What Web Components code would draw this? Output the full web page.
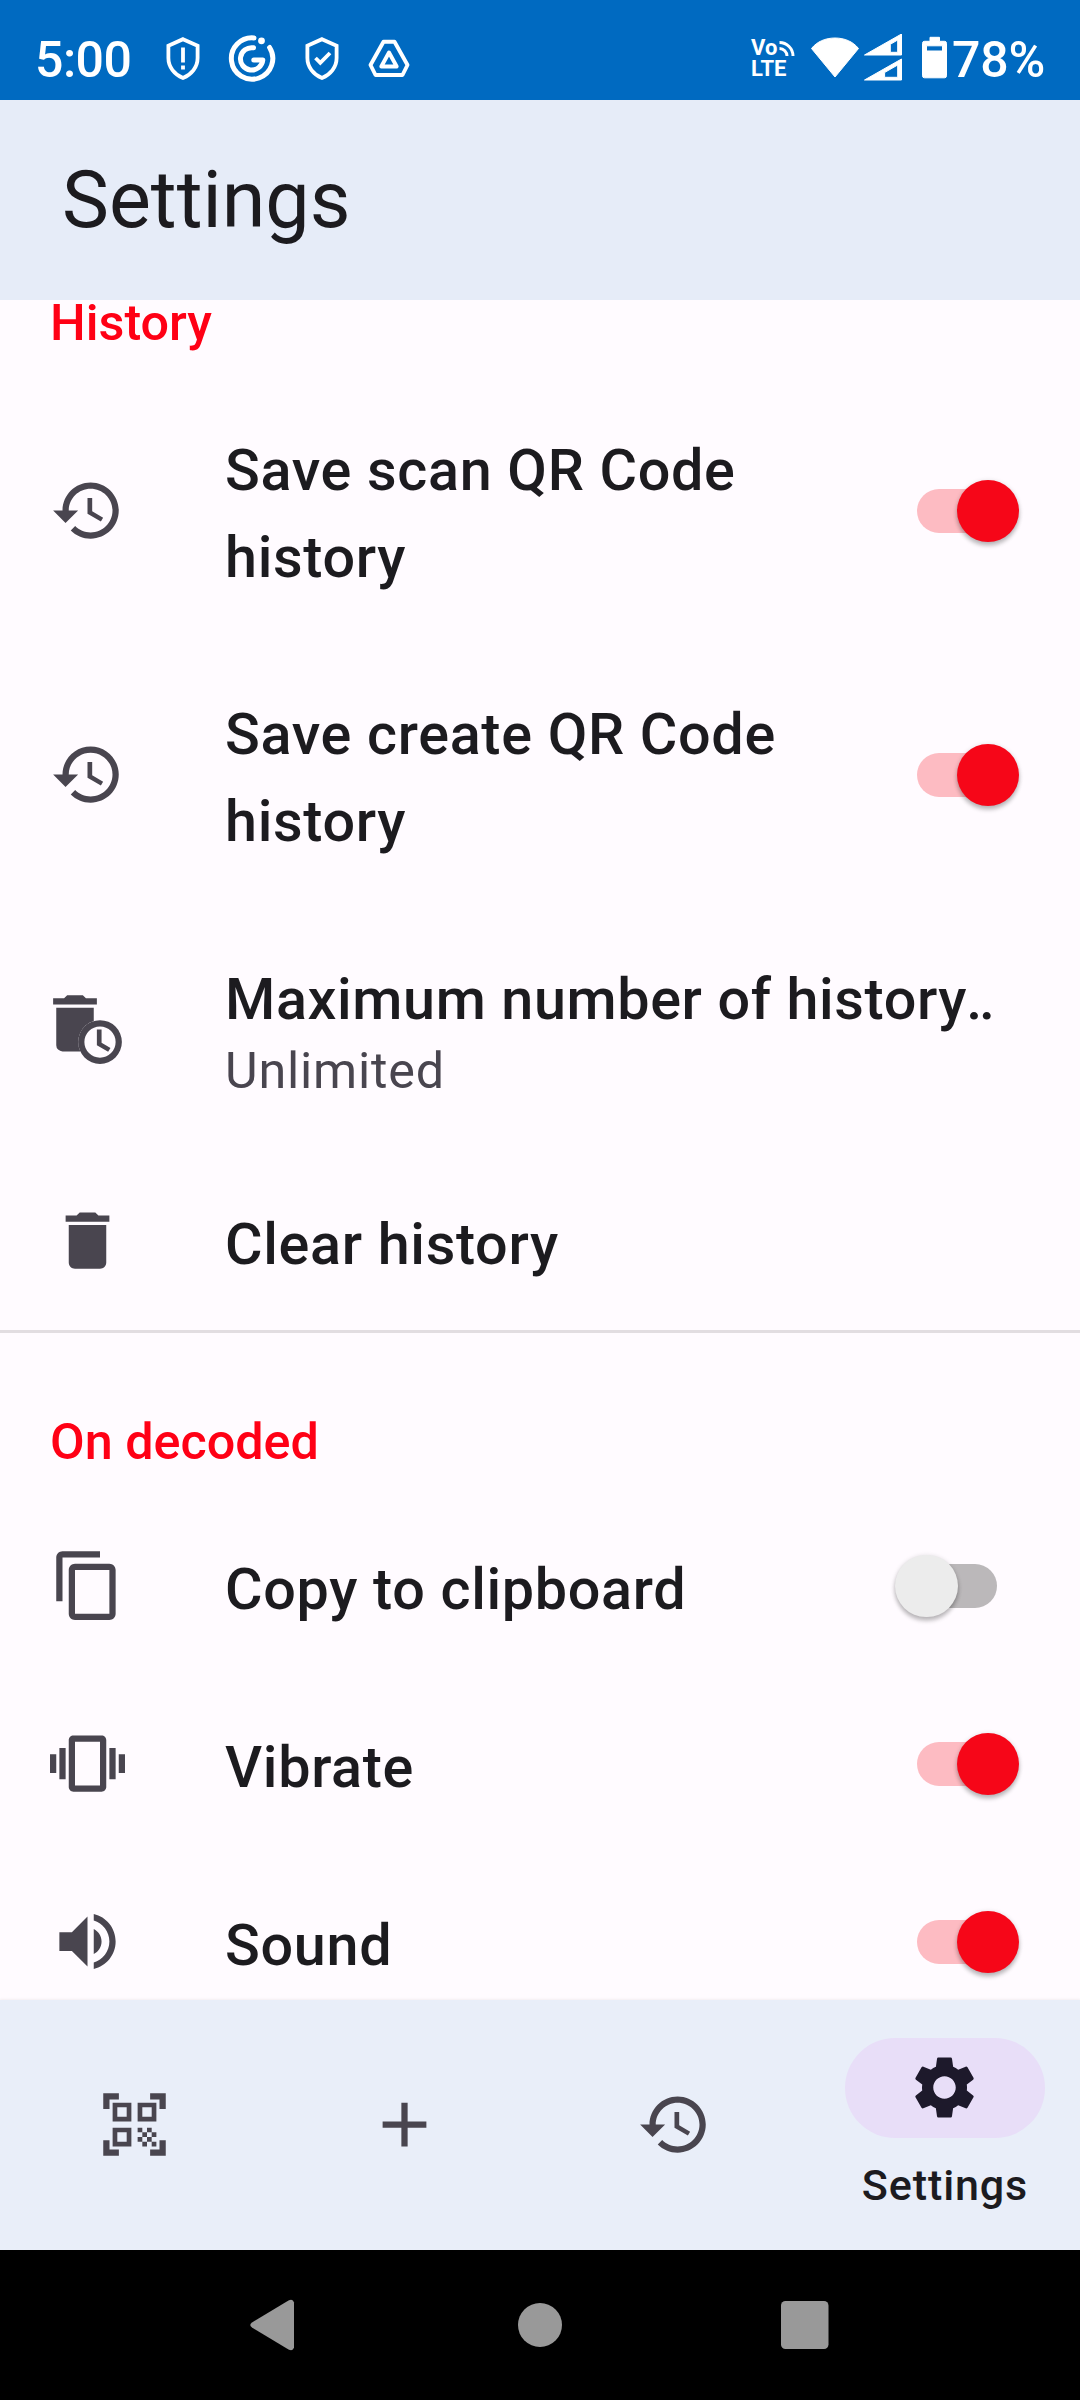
<!DOCTYPE html>
<html lang="en">
<head>
<meta charset="utf-8">
<title>Settings</title>
<style>
    body {
        margin: 0;
        width: 1080px;
        height: 2400px;
        overflow: hidden;
        font-family: Roboto, "Noto Sans", sans-serif;
        color: #1c1b1f;
        background: #fffbff;
    }
</style>
</head>
<body>
<settings-app></settings-app>

<script>
const ICONS = {
    history: '<path d="M13 3c-4.97 0-9 4.03-9 9H1l3.89 3.89.07.14L9 12H6c0-3.87 3.13-7 7-7s7 3.13 7 7-3.13 7-7 7c-1.93 0-3.68-.79-4.94-2.06l-1.42 1.42C8.27 19.99 10.51 21 13 21c4.97 0 9-4.03 9-9s-4.03-9-9-9zm-1 5v5l4.28 2.54.72-1.21-3.5-2.08V8H12z"/>',
    'delete-clock': '<path d="M15 4h-3.5l-1-1h-5l-1 1H1v2h14z" transform="translate(0 -2)"/><path d="M2 5h12v4.3A7 7 0 0 0 9.7 19H4a2 2 0 0 1-2-2z"/><path fill-rule="evenodd" d="M16 9a7 7 0 1 0 0 14 7 7 0 0 0 0-14zm0 2a5 5 0 1 1 0 10 5 5 0 0 1 0-10z"/><path d="M15 12v5l3.6 2.1.75-1.22-2.85-1.68V12z"/>',
    delete: '<path d="M6 19c0 1.1.9 2 2 2h8c1.1 0 2-.9 2-2V7H6v12zM19 4h-3.5l-1-1h-5l-1 1H5v2h14V4z"/>',
    copy: '<path d="M16 1H4c-1.1 0-2 .9-2 2v14h2V3h12V1zm3 4H8c-1.1 0-2 .9-2 2v14c0 1.1.9 2 2 2h11c1.1 0 2-.9 2-2V7c0-1.1-.9-2-2-2zm0 16H8V7h11v14z"/>',
    vibration: '<path d="M0 15h2V9H0v6zm3 2h2V7H3v10zm19-8v6h2V9h-2zm-3 8h2V7h-2v10zM16.5 3h-9C6.67 3 6 3.67 6 4.5v15c0 .83.67 1.5 1.5 1.5h9c.83 0 1.5-.67 1.5-1.5v-15c0-.83-.67-1.5-1.5-1.5zM16 19H8V5h8v14z"/>',
    volume: '<path d="M3 9v6h4l5 5V4L7 9H3zm13.5 3c0-1.77-1.02-3.29-2.5-4.03v8.05c1.48-.73 2.5-2.25 2.5-4.02zM14 3.23v2.06c2.89.86 5 3.54 5 6.71s-2.11 5.85-5 6.71v2.06c4.01-.91 7-4.49 7-8.77s-2.99-7.86-7-8.77z"/>',
    scanner: '<path d="M9.5 6.5v3h-3v-3h3M11 5H5v6h6V5zm-1.5 9.5v3h-3v-3h3M11 13H5v6h6v-6zm6.5-6.5v3h-3v-3h3M19 5h-6v6h6V5zm-6 8h1.5v1.5H13V13zm1.5 1.5H16V16h-1.5v-1.5zM16 13h1.5v1.5H16V13zm-3 3h1.5v1.5H13V16zm1.5 1.5H16V19h-1.5v-1.5zM16 16h1.5v1.5H16V16zm1.5-1.5H19V16h-1.5v-1.5zm0 3H19V19h-1.5v-1.5zM22 7h-2V4h-3V2h5v5zm0 15v-5h-2v3h-3v2h5zM2 22h5v-2H4v-3H2v5zM2 2v5h2V4h3V2H2z"/>',
    add: '<path d="M19 13h-6v6h-2v-6H5v-2h6V5h2v6h6v2z"/>',
    settings: '<path d="M19.14 12.94c.04-.3.06-.61.06-.94 0-.32-.02-.64-.07-.94l2.03-1.58c.18-.14.23-.41.12-.61l-1.92-3.32c-.12-.22-.37-.29-.59-.22l-2.39.96c-.5-.38-1.03-.7-1.62-.94l-.36-2.54c-.04-.24-.24-.41-.48-.41h-3.84c-.24 0-.43.17-.47.41l-.36 2.54c-.59.24-1.13.57-1.62.94l-2.39-.96c-.22-.08-.47 0-.59.22L2.74 8.87c-.12.21-.08.47.12.61l2.03 1.58c-.05.3-.09.63-.09.94s.02.64.07.94l-2.03 1.58c-.18.14-.23.41-.12.61l1.92 3.32c.12.22.37.29.59.22l2.39-.96c.5.38 1.03.7 1.62.94l.36 2.54c.05.24.24.41.48.41h3.84c.24 0 .44-.17.47-.41l.36-2.54c.59-.24 1.13-.56 1.62-.94l2.39.96c.22.08.47 0 .59-.22l1.92-3.32c.12-.22.07-.47-.12-.61l-2.01-1.58zM12 15.6c-1.98 0-3.6-1.62-3.6-3.6s1.62-3.6 3.6-3.6 3.6 1.62 3.6 3.6-1.62 3.6-3.6 3.6z"/>'
}

class BaseElement extends HTMLElement {

    connectedCallback() {
        const shadow = this.attachShadow({ mode: 'open' })
        shadow.innerHTML = this.render()
    }

}

class MdIcon extends BaseElement {

    render() {
        return `
            <style>
                :host { display: block; width: 75px; height: 75px; flex: none; }
                svg { display: block; fill: currentColor; }
            </style>
            <svg width="75" height="75" viewBox="0 0 24 24">${ICONS[this.getAttribute('name')]}</svg>
        `
    }

}
customElements.define('md-icon', MdIcon)

class StatusBar extends BaseElement {

    render() {
        return `
            <style>
                :host {
                    display: flex;
                    align-items: flex-start;
                    box-sizing: border-box;
                    height: 100px;
                    padding: 34px 37px 0 35px;
                    background: #006ac1;
                    color: #fff;
                    font-size: 50px;
                    font-weight: 500;
                    line-height: 52px;
                }
                svg { display: block; flex: none; fill: none; stroke: #fff; }
                .time { width: 129.5px; letter-spacing: -0.5px; }
                .left, .right { display: flex; align-items: flex-start; }
                .left { gap: 27.5px; }
                .right { margin-left: auto; }
                .volte {
                    position: relative;
                    width: 60px;
                    padding-top: 3px;
                    font-size: 22px;
                    font-weight: 700;
                    line-height: 21px;
                }
                .volte span { display: block; }
                .volte svg { position: absolute; left: 27px; top: 6px; }
                .percent { width: 91px; margin-left: 5px; letter-spacing: -0.2px; }
            </style>
            <div class="time">5:00</div>
            <div class="left">
                <svg width="36" height="48" viewBox="0 0 36 48" stroke-width="3.8">
                    <path d="M18 5.2 32.6 11.8V24c0 9-6 16.5-14.6 20C9.4 40.5 3.4 33 3.4 24V11.8z"/>
                    <path d="M18 13.5v15M18 31.5v4" stroke-width="3.8"/>
                </svg>
                <svg width="48" height="48" viewBox="0 0 48 48" stroke-width="5" stroke-linecap="round">
                    <path d="M26 3.9A20.7 20.7 0 1 0 41.6 13.5"/>
                    <path d="M25.5 13.8A11.2 11.2 0 1 0 34.8 26H25.8" stroke-linejoin="round"/>
                    <circle cx="33.5" cy="6.8" r="3.4" fill="#fff" stroke="none"/>
                </svg>
                <svg width="36" height="48" viewBox="0 0 36 48" stroke-width="3.8">
                    <path d="M18 5.2 32.6 11.8V24c0 9-6 16.5-14.6 20C9.4 40.5 3.4 33 3.4 24V11.8z"/>
                    <path d="m11.5 24 4.8 4.8L26 19" stroke-width="3.8"/>
                </svg>
                <svg width="44" height="48" viewBox="0 0 44 48" stroke-width="3.9" stroke-linejoin="round">
                    <path d="M16.5 7.7h11L40.5 31l-5 10h-27l-5-10z"/>
                    <path d="M22 18.5 29.7 32.5H14.3z"/>
                </svg>
            </div>
            <div class="right">
                <div class="volte">
                    <span>Vo</span>
                    <span>LTE</span>
                    <svg width="18" height="18" viewBox="0 0 18 18" stroke-width="3">
                        <path d="M1.5 2.5A13.5 13.5 0 0 1 15 16M1.5 8.5A7.5 7.5 0 0 1 9 16"/>
                    </svg>
                </div>
                <svg width="48" height="48" viewBox="0 0 48 48" stroke="none">
                    <path fill="#fff" d="M24 43 .5 14.5C6 7.5 14.5 4 24 4s18 3.5 23.5 10.5z"/>
                </svg>
                <svg style="margin: 0 20px 0 5px" width="38" height="48" viewBox="0 0 38 48" stroke="none">
                    <path fill="#fff" fill-rule="evenodd" d="M.5 21 37.5 0v21zM26.3 10.3v8h7.4V6z"/>
                    <path fill="#fff" fill-rule="evenodd" d="M.5 46 37.5 25v21zM20.6 38.5v4.8h13.1V31z"/>
                </svg>
                <svg width="25" height="48" viewBox="0 0 25 48" stroke="none">
                    <path fill="#fff" fill-rule="evenodd" d="M8 3.3h9.5v4H22.5a2 2 0 0 1 2 2v32.5a2 2 0 0 1-2 2H2.5a2 2 0 0 1-2-2V9.3a2 2 0 0 1 2-2H8zM4.5 11.8V17h16v-5.2z"/>
                </svg>
                <div class="percent">78%</div>
            </div>
        `
    }

}
customElements.define('status-bar', StatusBar)

class AppBar extends BaseElement {

    render() {
        return `
            <style>
                :host {
                    display: flex;
                    align-items: center;
                    box-sizing: border-box;
                    height: 200px;
                    padding: 0 62px;
                    background: #e6ecf8;
                    font-size: 79px;
                }
            </style>
            <slot></slot>
        `
    }

}
customElements.define('app-bar', AppBar)

class SectionHeader extends BaseElement {

    render() {
        return `
            <style>
                :host {
                    display: block;
                    box-sizing: border-box;
                    height: 164px;
                    padding: 83.5px 50px 0;
                    color: #ff0015;
                    font-size: 50.3px;
                    font-weight: 500;
                    line-height: 50px;
                }
            </style>
            <slot></slot>
        `
    }

}
customElements.define('section-header', SectionHeader)

class ToggleSwitch extends BaseElement {

    render() {
        return `
            <style>
                :host { display: block; position: relative; width: 125px; height: 64px; flex: none; }
                .track {
                    position: absolute;
                    left: 22px;
                    top: 10px;
                    width: 80px;
                    height: 44px;
                    border-radius: 22px;
                    background: #bbb8ba;
                }
                .thumb {
                    position: absolute;
                    left: 0;
                    top: 0.7px;
                    width: 62.5px;
                    height: 62.5px;
                    border-radius: 50%;
                    background: #ececec;
                    box-shadow: 0 4px 4px rgba(0, 0, 0, .2), 0 1px 5px rgba(0, 0, 0, .16);
                }
                :host([on]) .track { background: #fdbbc2; }
                :host([on]) .thumb { left: 61.7px; background: #f60618; }
            </style>
            <div class="track"></div>
            <div class="thumb"></div>
        `
    }

}
customElements.define('toggle-switch', ToggleSwitch)

class SettingTile extends BaseElement {

    render() {
        const subtitle = this.getAttribute('subtitle')
        // the truncation dots are set tighter than the title
        const label = this.getAttribute('label').replace(/\.\.$/, '<span class="dots">..</span>')
        return `
            <style>
                :host {
                    display: flex;
                    align-items: center;
                    box-sizing: border-box;
                    padding: 0 60px 0 50px;
                    height: 178px;
                }
                :host([lines="2"]) { height: 264px; }
                :host([subtitle]) { height: 246px; padding-right: 50px; }
                md-icon { margin: 0 100px 1px 0; color: #49454f; }
                :host([lines="2"]) md-icon, :host([subtitle]) md-icon { margin-bottom: 0; }
                .text {
                    flex: 1;
                    padding-top: 8px;
                    font-size: 57.5px;
                    font-weight: 500;
                    line-height: 86.25px;
                    letter-spacing: 0.68px;
                }
                .dots { margin-left: -1px; letter-spacing: -3px; }
                :host([lines="2"]) .text { padding-top: 9px; }
                :host([subtitle]) .text { white-space: nowrap; padding-top: 6.5px; letter-spacing: 0.62px; }
                .subtitle {
                    margin-top: -8.5px;
                    color: #49454f;
                    font-size: 50.3px;
                    font-weight: 400;
                    line-height: 72px;
                    letter-spacing: 0.8px;
                }
                ::slotted(toggle-switch) { margin-left: 40px; }
                :host([lines="2"]) ::slotted(toggle-switch) { margin-top: 2px; }
            </style>
            <md-icon name="${this.getAttribute('icon')}"></md-icon>
            <div class="text">
                <div>${label}</div>
                ${subtitle ? `<div class="subtitle">${subtitle}</div>` : ''}
            </div>
            <slot></slot>
        `
    }

}
customElements.define('setting-tile', SettingTile)

class NavItem extends BaseElement {

    render() {
        const label = this.getAttribute('label')
        return `
            <style>
                :host {
                    display: flex;
                    flex: 1;
                    flex-direction: column;
                    align-items: center;
                    justify-content: center;
                    color: #49454f;
                }
                .pill {
                    display: flex;
                    align-items: center;
                    justify-content: center;
                    width: 200px;
                    height: 100px;
                    border-radius: 50px;
                }
                md-icon { margin: 0 1px 2px 0; }
                :host([active]) .pill { background: #e8def8; color: #1d192b; }
                span {
                    margin-top: 22px;
                    color: #1c1b1f;
                    font-size: 43.1px;
                    font-weight: 500;
                    line-height: 52px;
                    letter-spacing: 0.85px;
                }
            </style>
            <div class="pill"><md-icon name="${this.getAttribute('icon')}"></md-icon></div>
            ${label ? `<span>${label}</span>` : ''}
        `
    }

}
customElements.define('nav-item', NavItem)

class BottomNav extends BaseElement {

    render() {
        return `
            <style>
                :host {
                    display: flex;
                    position: relative;
                    height: 250px;
                    background: #e9eef9;
                    box-shadow: 0 -1px 2px rgba(60, 30, 30, .06);
                }
            </style>
            <slot></slot>
        `
    }

}
customElements.define('bottom-nav', BottomNav)

class SystemNav extends BaseElement {

    render() {
        return `
            <style>
                :host {
                    display: flex;
                    align-items: center;
                    justify-content: space-between;
                    box-sizing: border-box;
                    height: 150px;
                    padding: 0 251px 0 250px;
                    background: #000;
                }
                svg { display: block; fill: #999; }
            </style>
            <svg width="46" height="52" viewBox="0 0 46 52">
                <path d="M2 23.5 38.5 1.5Q43 -.5 44 3.5V48.5Q43 52.5 38.5 50.5L2 28.5Q-1.5 26 2 23.5z"/>
            </svg>
            <svg width="46" height="44" viewBox="0 0 46 44"><circle cx="24" cy="22" r="22"/></svg>
            <svg width="48" height="48" viewBox="0 0 48 48"><rect width="47.5" height="48" rx="4.5"/></svg>
        `
    }

}
customElements.define('system-nav', SystemNav)

class SettingsApp extends BaseElement {

    render() {
        return `
            <style>
                :host { display: flex; flex-direction: column; height: 2400px; }
                main { flex: 1; min-height: 0; }
                /* list is scrolled a little past its first header, the bottom nav covers its end */
                .list { margin-top: -86px; }
                hr { margin: 0; border: 0; height: 3px; background: #e2dde1; }
            </style>
            <status-bar></status-bar>
            <app-bar>Settings</app-bar>
            <main>
                <div class="list">
                    <section-header>History</section-header>
                    <setting-tile icon="history" label="Save scan QR Code history" lines="2">
                        <toggle-switch on></toggle-switch>
                    </setting-tile>
                    <setting-tile icon="history" label="Save create QR Code history" lines="2">
                        <toggle-switch on></toggle-switch>
                    </setting-tile>
                    <setting-tile icon="delete-clock" label="Maximum number of history.." subtitle="Unlimited"></setting-tile>
                    <setting-tile icon="delete" label="Clear history"></setting-tile>
                    <hr>
                    <section-header>On decoded</section-header>
                    <setting-tile icon="copy" label="Copy to clipboard">
                        <toggle-switch></toggle-switch>
                    </setting-tile>
                    <setting-tile icon="vibration" label="Vibrate">
                        <toggle-switch on></toggle-switch>
                    </setting-tile>
                    <setting-tile icon="volume" label="Sound">
                        <toggle-switch on></toggle-switch>
                    </setting-tile>
                </div>
            </main>
            <bottom-nav>
                <nav-item icon="scanner"></nav-item>
                <nav-item icon="add"></nav-item>
                <nav-item icon="history"></nav-item>
                <nav-item icon="settings" label="Settings" active></nav-item>
            </bottom-nav>
            <system-nav></system-nav>
        `
    }

}
customElements.define('settings-app', SettingsApp)
</script>
</body>
</html>
